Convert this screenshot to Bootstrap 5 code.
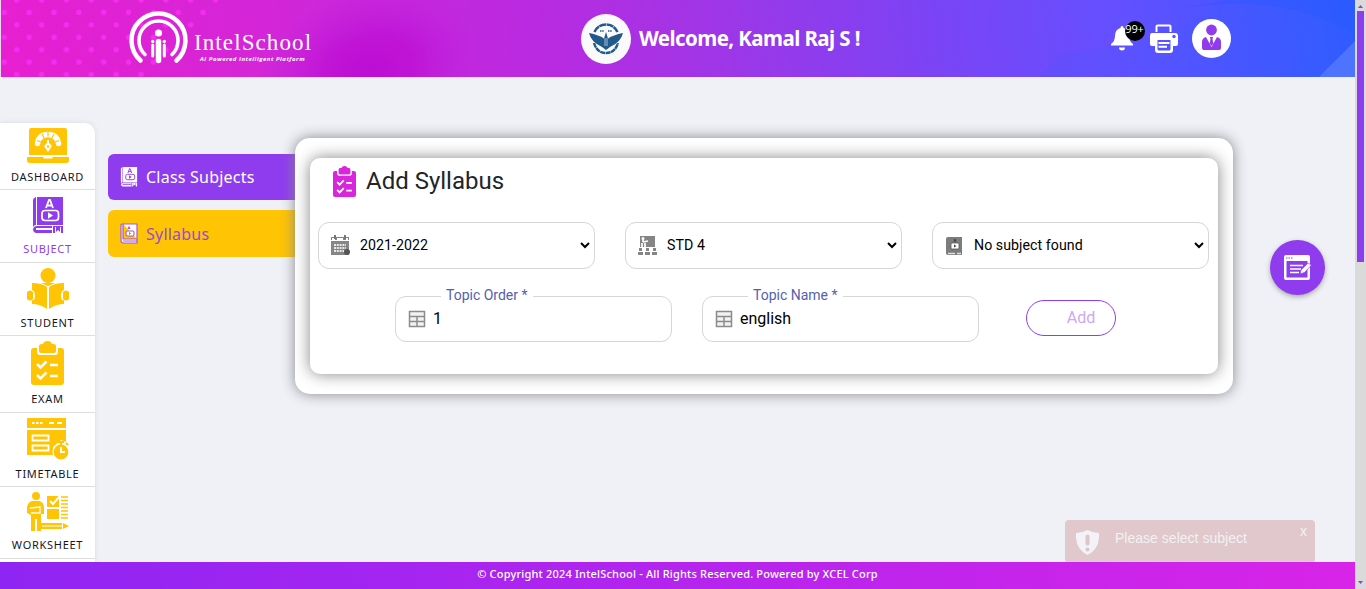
<!DOCTYPE html>
<html lang="en">
<head>
<meta charset="utf-8">
<meta name="viewport" content="width=device-width, initial-scale=1">
<title>IntelSchool - Add Syllabus</title>
<link href="https://cdn.jsdelivr.net/npm/bootstrap@5.3.0/dist/css/bootstrap.min.css" rel="stylesheet">
<style>
:root{--violet:#8f3cee;--gold:#ffc403}
body{background:#f0f1f6;font-family:Roboto,sans-serif;color:#000;overflow:hidden}
svg{display:block;flex:none}
.frame{height:100vh}
.app-head{height:77px;padding-left:127px}
.head-art{inset:0;width:100%;height:100%}
.head-row{z-index:1;height:77px}
.brand-box{width:454px;padding-top:10px}
.brand-name{font:23px/22px "Liberation Serif",serif;letter-spacing:1.1px;color:#fff;margin-top:22px;margin-bottom:1px}
.brand-tag{font:italic bold 6px/8px "Open Sans",sans-serif;letter-spacing:.5px;color:#fff;padding-left:6px}
.crest{width:50px;height:50px;background:#fafafa}
.welcome{font:bold 20.5px/26px "Noto Sans",sans-serif;letter-spacing:-.58px;color:#fff;white-space:nowrap;margin-top:-2px}
.greet{width:530px}
.count{left:14px;top:-5px;width:20px;height:20px;background:#000;color:#fff;font:11px/16px "Open Sans",sans-serif;text-align:center;letter-spacing:-.2px;text-indent:-1px}
.avatar{width:39px;height:39px;margin-left:13px}
.side{width:95px;margin-top:46px;border-top-right-radius:10px;box-shadow:0 0 5px #d9dae3;overflow:hidden}
.side a{display:flex;flex-direction:column;align-items:center;border-bottom:1px solid #dedede;color:#16161d;text-decoration:none;flex:none;font:11px/14px "Noto Sans",sans-serif;letter-spacing:.72px}
.side a span{margin-top:auto}
.side a svg{color:var(--gold)}
.side a.current,.side a.current svg{color:var(--violet)}
.submenu{width:187px;margin:77px 0 0 13px}
.submenu a{height:46px;border-radius:6px 0 0 6px;padding-left:12px;gap:8px;background:var(--violet);color:#fff;font:16px/20px "Noto Sans",sans-serif;letter-spacing:.22px;text-decoration:none}
.submenu a+a{height:47px;background:var(--gold);color:#974bd0}
.panel-outer{width:938px;height:256px;margin-top:61px;border-radius:15px;padding:20px 15px;box-shadow:0 0 14px #85868e;z-index:1}
.panel-inner{height:216px;border-radius:10px;box-shadow:0 0 16px #858585;padding:8px 9px 0 8px}
.title{font-size:24px;line-height:30px;color:#212529}
.field{width:277px;height:47px;border:1px solid #d6d6d6;border-radius:11px;padding-left:11px}
.field .form-select{border:0;box-shadow:none;background-color:transparent;font-size:14.2px;color:#000;padding:0 20px 0 9px;height:45px;letter-spacing:.04px;background-size:10px 7px;background-position:right 4px center;background-image:url("data:image/svg+xml,%3Csvg xmlns='http://www.w3.org/2000/svg' viewBox='0 0 10 7'%3E%3Cpath d='M1 1l4 4 4-4' fill='none' stroke='%23000' stroke-width='2'/%3E%3C/svg%3E")}
.fields-top{gap:30px;margin-top:25px}
.fields-low{gap:30px;margin:27px 0 0 77px}
.fields-low .field{height:46px}
.field .form-control{border:0;box-shadow:none;background:transparent;font-size:16px;color:#000;padding:0 0 0 6px;height:44px;line-height:44px}
.field label{left:45px;top:-12px;padding:0 5px;font-size:14px;line-height:20px;color:#5461ad;background:#fff;white-space:nowrap}
.add-btn{width:90px;height:36px;border:1px solid var(--violet);border-radius:18px;color:#cfa6f7;font-size:16px;line-height:31px;padding:0 0 2px 20px;margin:4px 0 0 17px;background:#fff}
.fab{width:55px;height:55px;background:var(--violet);margin:163px 0 0 37px;box-shadow:0 2px 5px #aaa;border:0;padding:0}
.notice{left:1065px;top:520px;width:250px;height:43px;border-radius:4px;background:#e0c8cc;color:#f3f1f3;z-index:1;font:14px/18px "Liberation Sans",sans-serif}
.notice p{margin:9px 0 0 16px;width:185px;letter-spacing:.02px}
.notice svg{margin:10px 0 0 11px}
.notice button{border:0;background:none;color:#f4f1f3;padding:0;font:14px/16px "Liberation Sans",sans-serif;margin-top:3px}
.app-foot{height:27px;background:linear-gradient(90deg,#8f25f3,#d824e8);color:#fff;font:11px/24px "Noto Sans",sans-serif;font-weight:500;letter-spacing:.19px;z-index:2}
.scroller{width:11px;background:#dadada}
.thumb{width:7px;height:251px;background:var(--violet);margin:11px 0 0 2px}
</style>
</head>
<body>
<svg width="0" height="0" class="position-absolute">
  <defs>
    <symbol id="book" viewBox="0 0 30 37">
      <path fill="currentColor" d="M4 0H30V28H4zM0 3Q0 1 3 0V28Q1 28 0 30zM4 29H19V31H3V33H19V36H3Q0 35 0 32Q1 29 4 29zM20 29H30V36H28V30H22V36H20zM23 30H27V35L25 33 23 35z"/>
      <path d="M13 11l3-8h1l3 8M14.500 8.500h4" fill="none" stroke="var(--cut,#fff)" stroke-width="1.800"/>
      <rect x="9" y="13.500" width="16.500" height="10" rx="3" fill="none" stroke="var(--cut,#fff)" stroke-width="1.700"/>
      <path d="M15 15.300v6.500l5-3.300z" fill="var(--cut,#fff)"/>
    </symbol>
    <symbol id="clip" viewBox="0 0 33 44">
      <path fill="currentColor" d="M3 7H6V11Q6 14 9 14H24Q27 14 27 11V7H30Q33 7 33 10V41Q33 44 30 44H3Q0 44 0 41V10Q0 7 3 7zM8 5Q8 3 11 3H12Q13 0 16.500 0T21 3H22Q25 3 25 5V10Q25 12 23 12H10Q8 12 8 10z"/>
      <path d="M6 23l3.500 3.500 6-6M6 34l3.500 3.500 6-6M19 24h8M19 35h8" fill="none" stroke="#fff" stroke-width="2.600"/>
    </symbol>
    <symbol id="grid" viewBox="0 0 18 18"><path d="M1.500 1.500h15v15h-15zM1.500 6.500h15M1.500 11.500h15M9 6.500v10" fill="#f2f2f2" stroke="#8c8c8c" stroke-width="1.500"/></symbol>
  </defs>
</svg>
<div class="frame d-flex position-relative">
  <div class="d-flex flex-column flex-grow-1 overflow-hidden">
    <header class="app-head position-relative">
      <svg class="head-art position-absolute" viewBox="0 0 1355 77" preserveAspectRatio="none">
        <defs>
          <linearGradient id="hg" gradientUnits="userSpaceOnUse" x1="0" y1="77" x2="1345" y2="-80">
            <stop offset="0" stop-color="#e81fd0"/><stop offset=".2" stop-color="#d326d8"/><stop offset=".4" stop-color="#b92ae0"/><stop offset=".55" stop-color="#9a38e8"/><stop offset=".68" stop-color="#7c43f4"/><stop offset=".82" stop-color="#654fff"/><stop offset="1" stop-color="#2f5cff"/>
          </linearGradient>
          <radialGradient id="hd" gradientUnits="userSpaceOnUse" cx="0" cy="0" r="1" gradientTransform="matrix(110 0 -20 85 370 70)"><stop offset="0" stop-color="#bc0cd4" stop-opacity=".95"/><stop offset=".4" stop-color="#bc0cd4" stop-opacity=".7"/><stop offset="1" stop-color="#bd20dc" stop-opacity="0"/></radialGradient>
          <pattern id="dots" width="24.850" height="24.850" patternUnits="userSpaceOnUse" x="-8.100" y="0"><circle cx="12.400" cy="12.400" r="2.700" fill="#f62cf0"/><circle cx="0" cy="0" r="2.700" fill="#f62cf0"/><circle cx="24.850" cy="0" r="2.700" fill="#f62cf0"/><circle cx="0" cy="24.850" r="2.700" fill="#f62cf0"/><circle cx="24.850" cy="24.850" r="2.700" fill="#f62cf0"/></pattern>
        </defs>
        <path fill="url(#hg)" d="M0 0H1355V77H0z"/>
        <path fill="url(#hd)" d="M240 0H500V77H240z"/>
        <path fill="url(#dots)" d="M0 0H222L144 77H0z"/>
        <path fill="#3563ff" opacity=".12" d="M1060 54Q1170 42 1226 0H1355V77H1040z"/>
        <path fill="#1c58ff" opacity=".25" d="M1163 12Q1275-12 1355 34V0H1226Q1200 5 1163 12z"/>
        <path fill="#7c9aff" opacity=".38" d="M1319 77L1355 41V77z"/>
        <path fill="#e9d7f0" d="M0 0H1V77H0z"/>
      </svg>
      <div class="head-row d-flex position-relative">
        <div class="brand-box d-flex align-items-start">
          <svg width="63" height="56" viewBox="0 0 63 56" fill="none" stroke="#fff" stroke-linecap="round">
            <path d="M13.500 50.500A27 27 0 1 1 49.500 50.500" stroke-width="4.500"/>
            <path d="M18 44.500A19.500 19.500 0 1 1 45 44.500" stroke-width="3.600"/>
            <circle cx="31.500" cy="23" r="3.600" fill="#fff" stroke="none"/>
            <path d="M31.500 31.500V50.500" stroke-width="5.500"/><path d="M25.700 35v11M37.300 35v11" stroke-width="3"/>
            <circle cx="25.700" cy="31.500" r="1.700" fill="#fff" stroke="none"/><circle cx="37.300" cy="31.500" r="1.700" fill="#fff" stroke="none"/>
          </svg>
          <div class="ps-1"><div class="brand-name">IntelSchool</div><div class="brand-tag">AI Powered Intelligent Platform</div></div>
        </div>
        <div class="greet d-flex align-items-center">
          <div class="crest rounded-circle d-flex align-items-center justify-content-center">
            <svg width="34" height="32" viewBox="0 0 34 32" fill="none" stroke="#21598a"><path d="M5.500 9Q9 1.500 17 1.500T28.500 9" stroke-width="2.600" stroke-dasharray="7 .5"/><path d="M5 20Q8 30 17 30T29 20" stroke-width="2.400" stroke-dasharray="5 .5"/><path d="M0 10Q10 12 15 15.500L17 9 19 15.500Q24 12 34 10Q32 19 21 24L17 27 13 24Q2 19 0 10z" fill="#21598a" stroke="none"/><path d="M16 15v8M18 15v8" stroke="#dfe9f1" stroke-width=".7"/><path d="M11 8h4M19 8h4" stroke-width="1.300" stroke-dasharray="1.500 .7"/></svg>
          </div>
          <div class="welcome ms-2">Welcome, Kamal Raj S !</div>
        </div>
        <div class="d-flex align-items-center">
          <div class="position-relative">
            <svg width="22" height="25" viewBox="0 0 22 25" fill="#fff"><path d="M11 0Q12.500 0 12.500 2Q18 3.500 18 10Q18 15 22 18V19.500H0V18Q4 15 4 10Q4 3.500 9.500 2Q9.500 0 11 0zM8 21.500H14Q14 24.500 11 24.500T8 21.500z"/></svg>
            <span class="count position-absolute rounded-circle d-block">99+</span>
          </div>
          <svg class="ms-3" width="30" height="30" viewBox="0 0 30 30"><path d="M7.500 8V2.500Q7.500 1.500 8.500 1.500H20.500Q21.500 1.500 21.500 2.500V8" fill="none" stroke="#fff" stroke-width="2"/><path fill="#fff" fill-rule="evenodd" d="M3 9H26Q29 9 29 12V20Q29 22 27 22H24V26Q24 29 21 29H9Q6 29 6 26V22H3Q1 22 1 20V12Q1 9 3 9zM8.500 16V25Q8.500 26.500 10 26.500H20Q21.500 26.500 21.500 25V16z"/><circle cx="25" cy="12.500" r="1.700" fill="#644fff"/><path d="M9.500 19H20.500M9.500 22.800H18" stroke="#fff" stroke-width="2"/></svg>
          <svg class="avatar" viewBox="0 0 39 39"><circle cx="19.500" cy="19.500" r="19.500" fill="#fff"/><circle cx="19.500" cy="11" r="5.400" fill="#913bed"/><path d="M14 18L19.500 28 25 18Q29 19 29 23V29Q29 31 27 31H12Q10 31 10 29V23Q10 19 14 18zM18 18H21L20.500 20 21.300 24.500 19.500 27 17.700 24.500 18.500 20z" fill="#913bed"/></svg>
        </div>
      </div>
    </header>
    <main class="d-flex flex-grow-1 align-items-start overflow-hidden" style="height:485px">
      <nav class="side bg-white d-flex flex-column align-self-stretch">
        <a href="#" style="height:67px;padding:5px 0 5px"><svg width="42" height="35" viewBox="0 0 42 35"><path fill="currentColor" d="M4 0H38Q40 0 40 2V27H2V2Q2 0 4 0zM0 29H16L17 30.500H25L26 29H42V32Q42 35 39 35H3Q0 35 0 32z"/><path d="M10.500 15.500Q12 6.500 21 6.500T31.500 15.500" fill="none" stroke="#fff" stroke-width="5.500" stroke-linecap="round"/><path d="M10 12.500l4 1.500M15 6l2 4M21 3.500v5M27 6l-2 4M32 12.500l-4 1.500" stroke="#ffc403" stroke-width="1.200"/><path fill="#fff" d="M20 12h2v3l3 3-4 6-4-6 3-3z"/><circle cx="21" cy="18.500" r="1.200" fill="#ffc403"/></svg><span>DASHBOARD</span></a>
        <a href="#" class="current" style="height:73px;padding:7px 0 6px"><svg width="30" height="37"><use href="#book"/></svg><span>SUBJECT</span></a>
        <a href="#" style="height:73px;padding:5px 0 5px"><svg width="42" height="41" viewBox="0 0 42 41"><circle cx="21" cy="7.500" r="7.500" fill="currentColor"/><path fill="currentColor" d="M5 15Q15 15 20 19V41Q13 36 5 36V32Q8 33 8 28T5 22zM37 15Q27 15 22 19V41Q29 36 37 36V32Q34 33 34 28T37 22zM0 24Q3 21 6 24V31Q3 34 0 31zM42 24Q39 21 36 24V31Q39 34 42 31zM14 15Q21 15 28 15L21 18z"/></svg><span>STUDENT</span></a>
        <a href="#" style="height:77px;padding:5px 0 6px"><svg width="33" height="44"><use href="#clip"/></svg><span>EXAM</span></a>
        <a href="#" style="height:74px;padding:5px 0 5px"><svg width="42" height="42" viewBox="0 0 42 42"><path fill="currentColor" d="M0 0H39V10H0zM0 12H39V24L34 22 26 29V37H0z"/><path d="M5 5h12" stroke="#fff" stroke-width="2" stroke-dasharray="2.500 1.500"/><path d="M22 5h5M30 5h5M5.500 17.500h16v5h-16zM5.500 27.500h16v5h-16z" fill="none" stroke="#fff" stroke-width="1.800"/><circle cx="34" cy="34" r="8" fill="currentColor" stroke="#fff" stroke-width="1.200"/><path d="M34 29v5h4" fill="none" stroke="#fff" stroke-width="2"/><path d="M31 24h6M34 23v4M26 27l2-2M41 27l-2-2" stroke="currentColor" stroke-width="2"/></svg><span>TIMETABLE</span></a>
        <a href="#" style="height:72px;padding:5px 0 6px"><svg width="42" height="39" viewBox="0 0 42 39"><circle cx="9" cy="4" r="4" fill="currentColor"/><path fill="currentColor" d="M5 9H12Q17 10 17 16V22H14V39H10V27H8V39H4V23L0 21V15Q1 10 5 9z"/><path d="M3 16l10-1v6H4" fill="none" stroke="#fff" stroke-width="1.300"/><path fill="currentColor" d="M20 4h12v11H20zM20 17h12v10H20zM14 31h21v6H14zM36 31l6 3-6 3z"/><path d="M23 9l3 3 7-8" fill="none" stroke="#fff" stroke-width="2"/><path d="M34 5h7M34 8.500h7M34 12h7M34 15.500h7M34 19h7M34 22.500h7M34 26h7" stroke="currentColor" stroke-width="1.600"/><path d="M15 34h20" stroke="#fff"/></svg><span>WORKSHEET</span></a>
      </nav>
      <div class="submenu d-flex flex-column">
        <a href="#" class="d-flex align-items-center mb-2"><svg width="18" height="20" style="--cut:#8f3cee"><use href="#book"/></svg><span>Class Subjects</span></a>
        <a href="#" class="d-flex align-items-center" style="margin-top:2px"><svg width="18" height="21" viewBox="0 0 18 21"><path d="M2 1h15v19H3Q1 20 1 17V3Q1 1 2 1zM3 1v15h14M3 18h14M8 6l1-2 1 2" fill="#fff" stroke="#a35bd0" stroke-width="1.200"/><rect x="6" y="8" width="8" height="5" rx="1.500" fill="#fff" stroke="#a35bd0" stroke-width="1.100"/><path d="M9 9v3l2-1.500z" fill="#a35bd0"/></svg><span>Syllabus</span></a>
      </div>
      <section class="panel-outer bg-white position-relative flex-shrink-0">
        <div class="panel-inner bg-white">
          <div class="d-flex align-items-start">
            <svg width="23" height="31" viewBox="0 0 33 44" preserveAspectRatio="none" style="color:#d926dc;margin-left:15px"><use href="#clip"/></svg>
            <h1 class="title fw-normal mb-0" style="margin-left:10px">Add Syllabus</h1>
          </div>
          <div class="fields-top d-flex">
            <div class="field d-flex align-items-center"><svg width="21" height="21" viewBox="0 0 21 21"><path fill="#858585" d="M1 2h18v3H1zM1 6h18v14H1z"/><path fill="#fff" d="M2 3h3v2H2zM7 3h6v2H7zM16 3h2v2h-2z"/><path d="M4 10h12M4 13h12M4 16h12" stroke="#e8e8e8" stroke-width="1.800" stroke-dasharray="2 .8"/><path d="M5 0v4M15 0v4" stroke="#777" stroke-width="2"/><circle cx="17" cy="17" r="3" fill="#555"/></svg><select class="form-select" aria-label="Year"><option>2021-2022</option></select></div>
            <div class="field d-flex align-items-center"><svg width="21" height="21" viewBox="0 0 21 21"><path fill="#858585" d="M3 1h15v11H3z"/><path d="M6 4v3M6 7l5-1M5 8v7M8 8v6" stroke="#fff" stroke-width="1.700"/><circle cx="6" cy="3.500" r="1.500" fill="#fff"/><path fill="#858585" d="M2 13h3v3H2zM9 13h3v3H9zM16 13h3v3h-3zM1 17h5v3H1zM8 17h5v3H8zM15 17h5v3h-5z"/></svg><select class="form-select" aria-label="Class"><option>STD 4</option></select></div>
            <div class="field d-flex align-items-center"><svg width="21" height="20" viewBox="0 0 21 20"><path fill="#7c7c7c" d="M4 1H18V19H4Q2 19 2 17V3Q2 1 4 1z"/><path d="M4 17.500h7M13 17.500h4" stroke="#ddd" stroke-width="1.600"/><path d="M10 6l1-3 1 3" stroke="#444" fill="none"/><rect x="7" y="7" width="8" height="6" rx="1" fill="#fff" stroke="#555" stroke-width=".8"/><path d="M10 8.500v3l2.500-1.500z" fill="#444"/></svg><select class="form-select" aria-label="Subject"><option>No subject found</option></select></div>
          </div>
          <div class="fields-low d-flex">
            <div class="field d-flex align-items-center position-relative"><label class="position-absolute" for="order">Topic Order *</label><svg width="20" height="18"><use href="#grid"/></svg><input id="order" class="form-control" value="1"></div>
            <div class="field d-flex align-items-center position-relative"><label class="position-absolute" for="topic">Topic Name *</label><svg width="20" height="18"><use href="#grid"/></svg><input id="topic" class="form-control" value="english"></div>
            <button class="add-btn" type="button">Add</button>
          </div>
        </div>
      </section>
      <button class="fab rounded-circle d-flex align-items-center justify-content-center flex-shrink-0" aria-label="Notes"><svg width="28" height="27" viewBox="0 0 28 27"><path fill="#fff" fill-rule="evenodd" d="M2 1H24Q26 1 26 3V24Q26 26 24 26H2Q0 26 0 24V3Q0 1 2 1zM2.500 7V23.500H23.500V7z"/><path d="M2 4h7" stroke="#8f3cee" stroke-dasharray="1.500 1"/><path d="M6 11.500h13M6 15h11M6 18.500h9" stroke="#fff" stroke-width="1.300"/><path d="M16 20l1-4 7-7 3.500 2-7 7.500z" fill="#fff" stroke="#8f3cee" stroke-width=".7"/></svg></button>
    </main>
    <footer class="app-foot text-center position-relative"><span>© Copyright 2024 IntelSchool - All Rights Reserved. Powered by XCEL Corp</span></footer>
  </div>
  <div class="scroller flex-shrink-0 position-relative d-flex flex-column"><svg class="position-absolute" width="11" height="11"><path d="M3 8h5L5.500 5z" fill="#8f3cee"/></svg><div class="thumb"></div><svg class="mt-auto" width="11" height="11"><path d="M3 3h5L5.500 6z" fill="#8f3cee"/></svg></div>
  <div class="notice position-absolute d-flex align-items-start"><svg width="23" height="25" viewBox="0 0 23 25"><path fill="#f3f3f7" d="M0 3Q6 3 11.500 0Q17 3 23 3V8Q22 20 11.500 25Q1 20 0 8z"/><path d="M11.500 6.500v7" stroke="#ddc5ca" stroke-width="4" stroke-linecap="round"/><circle cx="11.500" cy="19.500" r="2" fill="#ddc5ca"/></svg><p>Please select subject</p><button aria-label="Close">x</button></div>
</div>
<script src="https://cdn.jsdelivr.net/npm/bootstrap@5.3.0/dist/js/bootstrap.bundle.min.js"></script>
</body>
</html>
